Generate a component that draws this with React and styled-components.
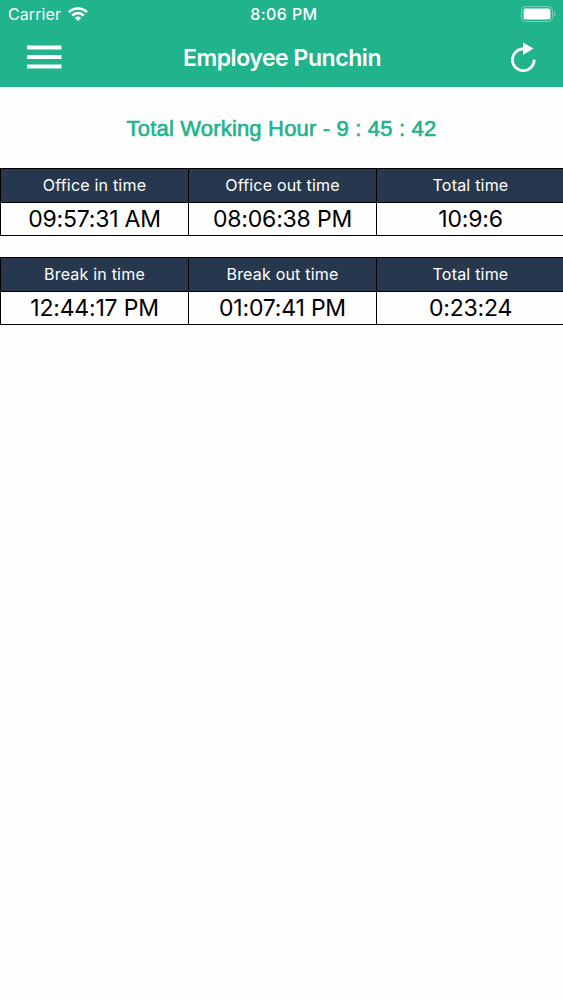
import React from 'react';
import styled, { createGlobalStyle } from 'styled-components';

const GlobalStyle = createGlobalStyle`
  * {
    box-sizing: border-box;
  }

  body {
    margin: 0;
    background: #fefefe;
    font-family: Inter, sans-serif;
  }
`;

const Screen = styled.div`
  display: flex;
  flex-direction: column;
  min-height: 1000px;
  overflow: hidden;
`;

const Header = styled.header`
  background: #20b38c;
  color: #fff;
  height: 87px;
`;

const StatusBar = styled.div`
  display: grid;
  grid-template-columns: 1fr auto 1fr;
  align-items: center;
  height: 28px;
  padding: 0 7px 0 8px;
`;

const Carrier = styled.div`
  display: flex;
  align-items: center;
  gap: 7px;
  font-size: 16px;
  letter-spacing: 0.1px;
`;

const Clock = styled.div`
  margin-left: 4px;
  font-size: 16px;
  font-weight: 500;
  letter-spacing: 0.4px;
`;

const Battery = styled.svg`
  justify-self: end;
`;

const NavBar = styled.div`
  display: grid;
  grid-template-columns: 1fr auto 1fr;
  align-items: center;
  height: 58px;
  padding: 0 26px 0 27px;
`;

const Title = styled.h1`
  margin: 2px 0 0;
  font-size: 23px;
  font-weight: 600;
  letter-spacing: -0.45px;
`;

const IconButton = styled.button`
  display: flex;
  justify-self: ${({ $side }) => $side};
  padding: 0;
  border: 0;
  background: none;
  color: inherit;
`;

const WorkingHour = styled.p`
  margin: 0;
  height: 81px;
  line-height: 83px;
  text-align: center;
  color: #20b38c;
  font-family: 'Liberation Sans', sans-serif;
  font-size: 22px;
  letter-spacing: 0.18px;
  -webkit-text-stroke: 0.6px #20b38c;
`;

const Table = styled.div`
  margin-bottom: 21px;
  border-left: 1px solid #000;
`;

const Row = styled.div`
  display: grid;
  grid-template-columns: repeat(3, 188px);
`;

const Cell = styled.div`
  display: flex;
  justify-content: center;
  align-items: center;
  height: 33px;
  border-right: 1px solid #000;
  border-bottom: 1px solid #000;
  font-size: 23px;
  letter-spacing: -0.2px;
  color: #000;
`;

const HeadCell = styled(Cell)`
  height: 35px;
  padding-bottom: 1px;
  border-top: 1px solid #000;
  background: #27384e;
  color: #fff;
  font-size: 16px;
  letter-spacing: 0.2px;
`;

const tables = [
  {
    head: ['Office in time', 'Office out time', 'Total time'],
    values: ['09:57:31 AM', '08:06:38 PM', '10:9:6'],
  },
  {
    head: ['Break in time', 'Break out time', 'Total time'],
    values: ['12:44:17 PM', '01:07:41 PM', '0:23:24'],
  },
];

function TimeTable({ head, values }) {
  return (
    <Table>
      <Row>
        {head.map(label => <HeadCell key={label}>{label}</HeadCell>)}
      </Row>
      <Row>
        {values.map(value => <Cell key={value}>{value}</Cell>)}
      </Row>
    </Table>
  );
}

export default function App() {
  return (
    <Screen>
      <GlobalStyle />
      <Header>
        <StatusBar>
          <Carrier>
            <span>Carrier</span>
            <svg width="20" height="14" viewBox="0 0 20 14" fill="none" stroke="#fff" strokeWidth="2.6">
              <path d="M1 5.2a12.7 12.7 0 0 1 18 0" />
              <path d="M4.3 8.5a8 8 0 0 1 11.4 0" />
              <path d="M10 14L6.9 10.9a4.4 4.4 0 0 1 6.2 0z" fill="#fff" stroke="none" />
            </svg>
          </Carrier>
          <Clock>8:06 PM</Clock>
          <Battery width="35" height="16" viewBox="0 0 35 16">
            <rect x="0.5" y="0.5" width="31" height="15" rx="4" fill="none" stroke="#79d1ba" />
            <rect x="2.5" y="2.5" width="27" height="11" rx="2" fill="#fff" />
            <path d="M33 5.5c2 .7 2 4.3 0 5z" fill="#79d1ba" />
          </Battery>
        </StatusBar>
        <NavBar>
          <IconButton $side="start" aria-label="Menu">
            <svg width="35" height="24" viewBox="0 0 35 24" fill="#fff">
              <path d="M0 .5h34.500v4H0zM0 10h34.500v4H0zM0 19.500h34.500v4H0z" />
            </svg>
          </IconButton>
          <Title>Employee Punchin</Title>
          <IconButton $side="end" aria-label="Refresh">
            <svg width="26" height="30" viewBox="0 0 26 30" fill="none">
              <path d="M12.300 6.900A10.900 10.900 0 1 0 23.200 17.800" stroke="#fff" strokeWidth="2.700" />
              <path d="M12 .5l10.500 6-10.500 6.500z" fill="#fff" />
            </svg>
          </IconButton>
        </NavBar>
      </Header>
      <WorkingHour>Total Working Hour - 9 : 45 : 42</WorkingHour>
      {tables.map(table => (
        <TimeTable key={table.head[0]} head={table.head} values={table.values} />
      ))}
    </Screen>
  );
}
